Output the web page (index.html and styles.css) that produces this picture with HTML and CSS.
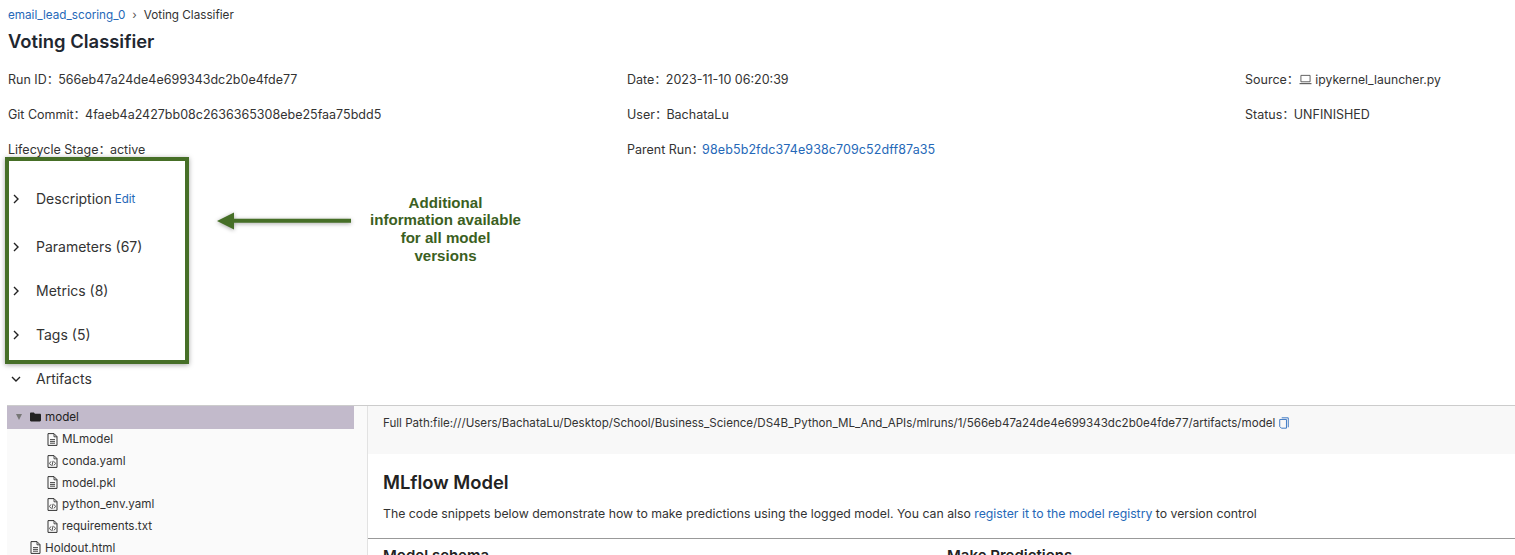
FILE: index.html
```html
<!DOCTYPE html>
<html lang="en">
<head>
<meta charset="utf-8">
<title>Voting Classifier</title>
<link rel="stylesheet" href="styles.css">
</head>
<body>
<svg class="defs" width="0" height="0" aria-hidden="true">
  <symbol id="file" viewBox="0 0 11 13"><path d="M1 .6h6l3 3v8.8H1z" fill="none" stroke="#333" stroke-width="1"/><path d="M7 .8v3h3M3 6.6h5M3 8.4h5M3 10.2h5" fill="none" stroke="#333" stroke-width=".9"/></symbol>
  <symbol id="code" viewBox="0 0 11 13"><path d="M1 .6h6l3 3v8.8H1z" fill="none" stroke="#333" stroke-width="1"/><path d="M7 .8v3h3M4 6.4 2.5 8.4 4 10.4M7 6.4 8.5 8.4 7 10.4M6.1 5.8 4.9 11" fill="none" stroke="#333" stroke-width=".85"/></symbol>
  <symbol id="chev-r" viewBox="0 0 10 10"><path d="M3 1 7 5 3 9" fill="none" stroke="#222" stroke-width="1.4"/></symbol>
  <symbol id="chev-d" viewBox="0 0 10 10"><path d="M1 3 5 7 9 3" fill="none" stroke="#222" stroke-width="1.4"/></symbol>
</svg>

<div class="page">
  <nav class="crumbs"><a href="#">email_lead_scoring_0</a><span class="sep">›</span><span>Voting Classifier</span></nav>
  <h1 class="title">Voting Classifier</h1>

  <div class="meta">
    <div class="meta-item"><span class="label">Run ID：</span>566eb47a24de4e699343dc2b0e4fde77</div>
    <div class="meta-item"><span class="label">Date：</span>2023-11-10 06:20:39</div>
    <div class="meta-item"><span class="label">Source：</span><svg class="laptop" viewBox="0 0 14 12"><path d="M2 1.5h10v7H2z" fill="none" stroke="#555" stroke-width="1"/><path d="M.5 10.5h13" stroke="#555" stroke-width="1.2"/></svg><span class="source-name">ipykernel_launcher.py</span></div>
    <div class="meta-item"><span class="label">Git Commit：</span>4faeb4a2427bb08c2636365308ebe25faa75bdd5</div>
    <div class="meta-item"><span class="label">User：</span>BachataLu</div>
    <div class="meta-item"><span class="label">Status：</span>UNFINISHED</div>
    <div class="meta-item"><span class="label">Lifecycle Stage：</span>active</div>
    <div class="meta-item"><span class="label">Parent Run：</span><a class="parent-link" href="#">98eb5b2fdc374e938c709c52dff87a35</a></div>
  </div>

  <section class="sections">
    <div class="section first"><svg class="chev"><use href="#chev-r"/></svg><span>Description</span><a class="edit" href="#">Edit</a></div>
    <div class="section"><svg class="chev"><use href="#chev-r"/></svg><span>Parameters (67)</span></div>
    <div class="section"><svg class="chev"><use href="#chev-r"/></svg><span>Metrics (8)</span></div>
    <div class="section"><svg class="chev"><use href="#chev-r"/></svg><span>Tags (5)</span></div>
    <div class="section"><svg class="chev"><use href="#chev-d"/></svg><span>Artifacts</span></div>
  </section>

  <div class="artifacts">
    <aside class="tree">
      <div class="row selected"><span class="caret"></span><svg class="folder" viewBox="0 0 12 10"><path d="M0 1.3C0 .6.5 0 1.2 0h3l1.2 1.4h5.4c.7 0 1.2.5 1.2 1.2v6c0 .7-.5 1.2-1.2 1.2H1.2C.5 9.8 0 9.3 0 8.6z" fill="#222"/></svg>model</div>
      <div class="row child"><svg class="ficon"><use href="#file"/></svg>MLmodel</div>
      <div class="row child"><svg class="ficon"><use href="#code"/></svg>conda.yaml</div>
      <div class="row child"><svg class="ficon"><use href="#file"/></svg>model.pkl</div>
      <div class="row child"><svg class="ficon"><use href="#code"/></svg>python_env.yaml</div>
      <div class="row child"><svg class="ficon"><use href="#code"/></svg>requirements.txt</div>
      <div class="row top"><svg class="ficon"><use href="#file"/></svg>Holdout.html</div>
    </aside>
    <main class="detail">
      <div class="path">Full Path:file:///Users/BachataLu/Desktop/School/Business_Science/DS4B_Python_ML_And_APIs/mlruns/1/566eb47a24de4e699343dc2b0e4fde77/artifacts/model<svg class="copy" viewBox="0 0 11 13"><path d="M3 .8h7.2v10.4" fill="none" stroke="#2f6fc0" stroke-width="1"/><path d="M.8 2.6h7.4v9.6H2.6L.8 10.4z" fill="none" stroke="#2f6fc0" stroke-width="1"/></svg></div>
      <div class="model-intro">
        <h2>MLflow Model</h2>
        <p>The code snippets below demonstrate how to make predictions using the logged model. You can also <a href="#">register it to the model registry</a> to version control</p>
      </div>
      <div class="model-cols">
        <h3>Model schema</h3>
        <h3>Make Predictions</h3>
      </div>
    </main>
  </div>
</div>

<div class="callout-box"></div>
<svg class="callout-arrow" viewBox="0 0 136 20"><path d="M1 10 18 1.5V7.8H135V11.8H18V18.5z" fill="#466f27"/></svg>
<div class="callout-text">Additional<br>information available<br>for all model<br>versions</div>
</body>
</html>
```

FILE: styles.css
```css
* { box-sizing: border-box; }
html, body { margin: 0; height: 555px; overflow: hidden; background: #fff; }
body { position: relative; font-family: Inter, "Noto Sans CJK SC", "Liberation Sans", sans-serif; font-size: 12px; color: #222; }
a { color: #2568b8; text-decoration: none; }
.defs { position: absolute; }

.page { padding: 8px 0 0 8px; height: 555px; overflow: hidden; }
.crumbs { display: flex; align-items: center; height: 14px; font-size: 11.7px; color: #333; }
.sep { margin: 0 7px; color: #555; }
.title { margin: 7px 0 0; height: 24px; font-size: 18.4px; line-height: 24px; font-weight: 600; color: #1f2730; }

.meta { display: grid; grid-template-columns: 619px 618px 1fr; grid-auto-rows: 35px; margin-top: 18px; font-size: 12.5px; line-height: 18px; color: #333; }
.meta-item { height: 18px; white-space: nowrap; overflow: visible; }
.label { display: inline-block; height: 18px; line-height: 18px; margin-right: -1px; }
.laptop { width: 13px; height: 11px; margin: 0 3px 0 1px; vertical-align: -1px; }
.source-name { font-size: 12.2px; }
.parent-link { margin-left: -1px; letter-spacing: .1px; }

.sections { margin-top: -1px; font-size: 14px; color: #333; }
.section { display: flex; align-items: center; height: 44px; }
.section.first { height: 49px; padding-bottom: 3px; }
.chev { width: 10px; height: 10px; margin: 2px 15px 0 3px; flex: none; }
.edit { margin-left: 3px; font-size: 11.5px; padding-top: 1px; }

.artifacts { display: flex; margin: 5px 0 0 -1px; height: 150px; overflow: hidden; border-top: 1px solid #ccc; background: #fafafa; }
.tree { width: 360px; padding-right: 13px; flex: none; font-size: 11.65px; color: #333; }
.row { display: flex; align-items: center; height: 21.7px; white-space: nowrap; }
.row.selected { height: 22.5px; background: #c2bacb; padding-left: 9px; color: #222; }
.row.child { padding-left: 40px; }
.row.top { padding-left: 23px; }
.caret { width: 0; height: 0; border-left: 3px solid transparent; border-right: 3px solid transparent; border-top: 6px solid #777; margin-right: 8px; }
.folder { width: 11px; height: 10px; margin-right: 4px; }
.ficon { width: 11px; height: 13px; margin-right: 4px; flex: none; }

.detail { flex: 1; border-left: 1px solid #e2e2e2; min-width: 0; background: #fff; }
.path { height: 48px; padding: 10px 0 0 15px; background: #f8f8f8; font-size: 11.6px; color: #333; white-space: nowrap; display: flex; align-items: flex-start; }
.copy { width: 10px; height: 12px; margin: 1px 0 0 4px; flex: none; }
.model-intro { height: 85px; padding: 17px 0 0 15px; border-bottom: 1px solid #999; }
.model-intro h2 { margin: 0; font-size: 18.4px; line-height: 22px; font-weight: 600; color: #222; }
.model-intro p { margin: 13px 0 0; font-size: 12.28px; line-height: 16px; color: #333; white-space: nowrap; }
.model-cols { display: grid; grid-template-columns: 564px 1fr; padding: 8px 0 0 15px; }
.model-cols h3 { margin: 0; font-size: 15px; line-height: 18px; font-weight: 600; color: #222; }

.callout-box { position: absolute; left: 5px; top: 157px; width: 184px; height: 207px; border: 4px solid #466f27; box-shadow: 0 1px 5px rgba(0,0,0,.35); }
.callout-arrow { position: absolute; left: 216px; top: 211px; width: 136px; height: 20px; filter: drop-shadow(0 1px 2px rgba(0,0,0,.35)); }
.callout-text { position: absolute; left: 345px; top: 193.5px; width: 201px; text-align: center; font-family: "Liberation Sans", Arial, sans-serif; font-size: 15.1px; line-height: 17.7px; font-weight: 700; color: #3b5f22; }
```
